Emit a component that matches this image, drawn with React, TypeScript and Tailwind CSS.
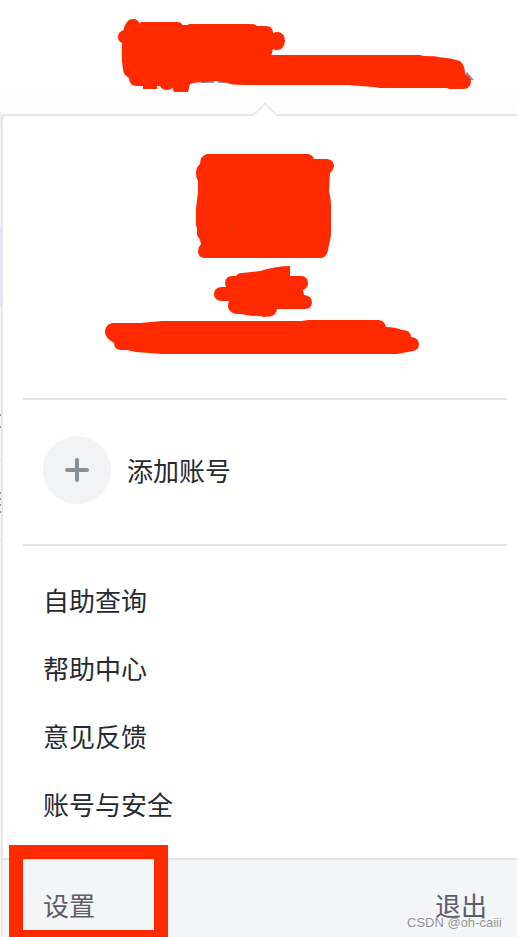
import { ReactNode } from 'react';

const menuItems = ['自助查询', '帮助中心', '意见反馈', '账号与安全'];

function Divider() {
  return <div className="ml-5 mr-[10px] h-[2px] bg-[#e5e6eb]" />;
}

function MenuItem({ children }: { children: ReactNode }) {
  return (
    <button className="flex h-[68px] w-full items-center px-10 text-left text-[#262a30]">
      {children}
    </button>
  );
}

// Part of the page that is still visible to the left of the popover
function PageEdge() {
  return (
    <div className="flex w-px shrink-0 flex-col bg-[#f7f7f8]">
      <div className="h-3 bg-[#eeeeee]" />
      <div className="h-[100px]" />
      <div className="h-20 bg-[#dfe8f3]" />
      <div className="h-[108px]" />
      <div className="h-[2px] bg-[#8b929c]" />
      <div className="h-[10px]" />
      <div className="h-[2px] bg-[#8b929c]" />
      <div className="h-[30px]" />
      <div className="h-[2px] bg-[#e5e6eb]" />
      <div className="h-8" />
      <div className="h-[2px] bg-[#8b929c]" />
      <div className="h-1" />
      <div className="h-[2px] bg-[#8b929c]" />
      <div className="h-1" />
      <div className="h-[2px] bg-[#8b929c]" />
      <div className="h-[5px]" />
      <div className="h-[2px] bg-[#8b929c]" />
      <div className="h-[27px]" />
      <div className="h-[2px] bg-[#e5e6eb]" />
    </div>
  );
}

function Redactions() {
  return (
    <svg className="pointer-events-none absolute left-0 top-0" width="517" height="380" viewBox="0 0 517 380">
      <path d="M465 74L467 72L474 80H468Z" fill="#8b95a1" />
      <path d="M201 81.500Q207 80 214 80.500V83H201ZM218 80.500H223L226 83H218Z" fill="#8b95a1" />
      <g fill="#ff2a00">
        <path d="M118 37Q118 32 123.500 30Q124 26 127 22Q129 19 133 19Q138 19 139.300 23.500L141 22H177Q181 22 182.700 25H187L190 24H251Q255 24 257 26H266Q273 26 273 33Q275 32 278 32Q285 33 285 41Q284 50 277 50Q274 50 272.700 49Q272.500 53 271.300 55H420L424 56L435 56.200L438 57Q451 58 460 61Q465 65 465 74Q471 77 471 82Q470 89 464 89H450L446 88H380L374 87Q360 86 347 85H243Q232 85 225 82.500Q216 80 206 82Q194 82 190 84L188 92H174L172.500 88Q170 90 167 90Q162 90 160 86H157V89H143V86H136Q129 85 129 78Q123 75 123 69Q121 58 122 43Q118 41 118 37Z" />
        <path d="M207 154H308Q313 155 314 159H327Q334 160 334 166Q333 171 330 173L329 192Q331 198 331 206V235L328 250Q327 257 321 258H204Q198 257 198 251Q198 247 201 244L200 240L197 235V227L196 226V208L198 192V181Q196 178 196 173Q196 167 200 164Q200 156 207 154Z" />
        <path d="M236 276Q238 273 242 273L260 271Q277 266 290 266V276H302Q308 277 308 283Q308 288 303 290L304 295Q312 296 312 302Q312 309 305 309H277Q276 316 270 316.500L263 317L261 316Q247 316 242 314H236Q228 312 228 306Q228 303 229 301H221Q214 300 214 294Q214 288 221 287H226Q225 284 225 282Q226 276 232 276Z" />
        <path d="M112 323H140L162 321H302L308 320H379Q385 321 386 327Q395 327 402 330Q411 330 411 337Q419 338 419 344Q419 350 413 351L397 354H162L136 352L127 350H120Q114 349 114 343Q105 338 105 332Q105 325 112 323Z" />
      </g>
      <path d="M229 223.500L234 224.500" stroke="#9a4020" strokeWidth="0.7" />
    </svg>
  );
}

export default function App() {
  return (
    <main className="relative flex h-[937px] w-[517px] flex-col overflow-hidden bg-white font-['Noto_Sans_CJK_SC',sans-serif] text-[26px] leading-none">
      <header className="h-[114px] shrink-0 bg-linear-to-b from-white from-80% to-[#fbfbfb]" />

      <div className="flex flex-1 bg-[#eeeeee]">
        <PageEdge />
        <section className="relative flex flex-1 flex-col rounded-tl-[6px] border-l-2 border-t-2 border-[#e5e6eb] bg-white">
          <svg className="absolute left-[249px] top-[-14px]" width="26" height="15" viewBox="0 0 26 15" fill="none">
            <path d="M1 15V13L13 1.500L25 13V15Z" fill="white" />
            <path d="M0 13H1.500L13 1.500L24.500 13H26" stroke="#e5e6eb" strokeWidth="1.500" />
          </svg>

          <div className="h-[282px] shrink-0" />
          <Divider />

          <button className="flex h-[144px] items-center gap-4 px-10 pb-1 text-left text-[#262a30]">
            <span className="flex size-[68px] items-center justify-center rounded-full bg-[#f2f3f5]">
              <svg width="24" height="24" viewBox="0 0 24 24" stroke="#86909c" strokeWidth="4" strokeLinecap="round">
                <path d="M2 12H22M12 2V22" />
              </svg>
            </span>
            <span>添加账号</span>
          </button>
          <Divider />

          <nav className="pt-5">
            {menuItems.map((item) => (
              <MenuItem key={item}>{item}</MenuItem>
            ))}
          </nav>

          <footer className="mt-5 flex flex-1 items-start justify-between border-t-2 border-[#e5e6eb] bg-[#f4f5f7] pl-10 pr-[30px] pt-8 text-[#5b5f67]">
            <button>设置</button>
            <button>退出</button>
          </footer>
        </section>
      </div>

      <Redactions />
      <div className="pointer-events-none absolute left-[9px] top-[845px] h-[99px] w-[159px] border-[14px] border-[#ff2a00]" />
      <span className="absolute left-[407px] top-[915px] font-['Liberation_Sans',sans-serif] text-[13px] leading-[15px] text-[#909295] [text-shadow:1px_1px_0_#ffffff]">
        CSDN @oh-caiii
      </span>
    </main>
  );
}
